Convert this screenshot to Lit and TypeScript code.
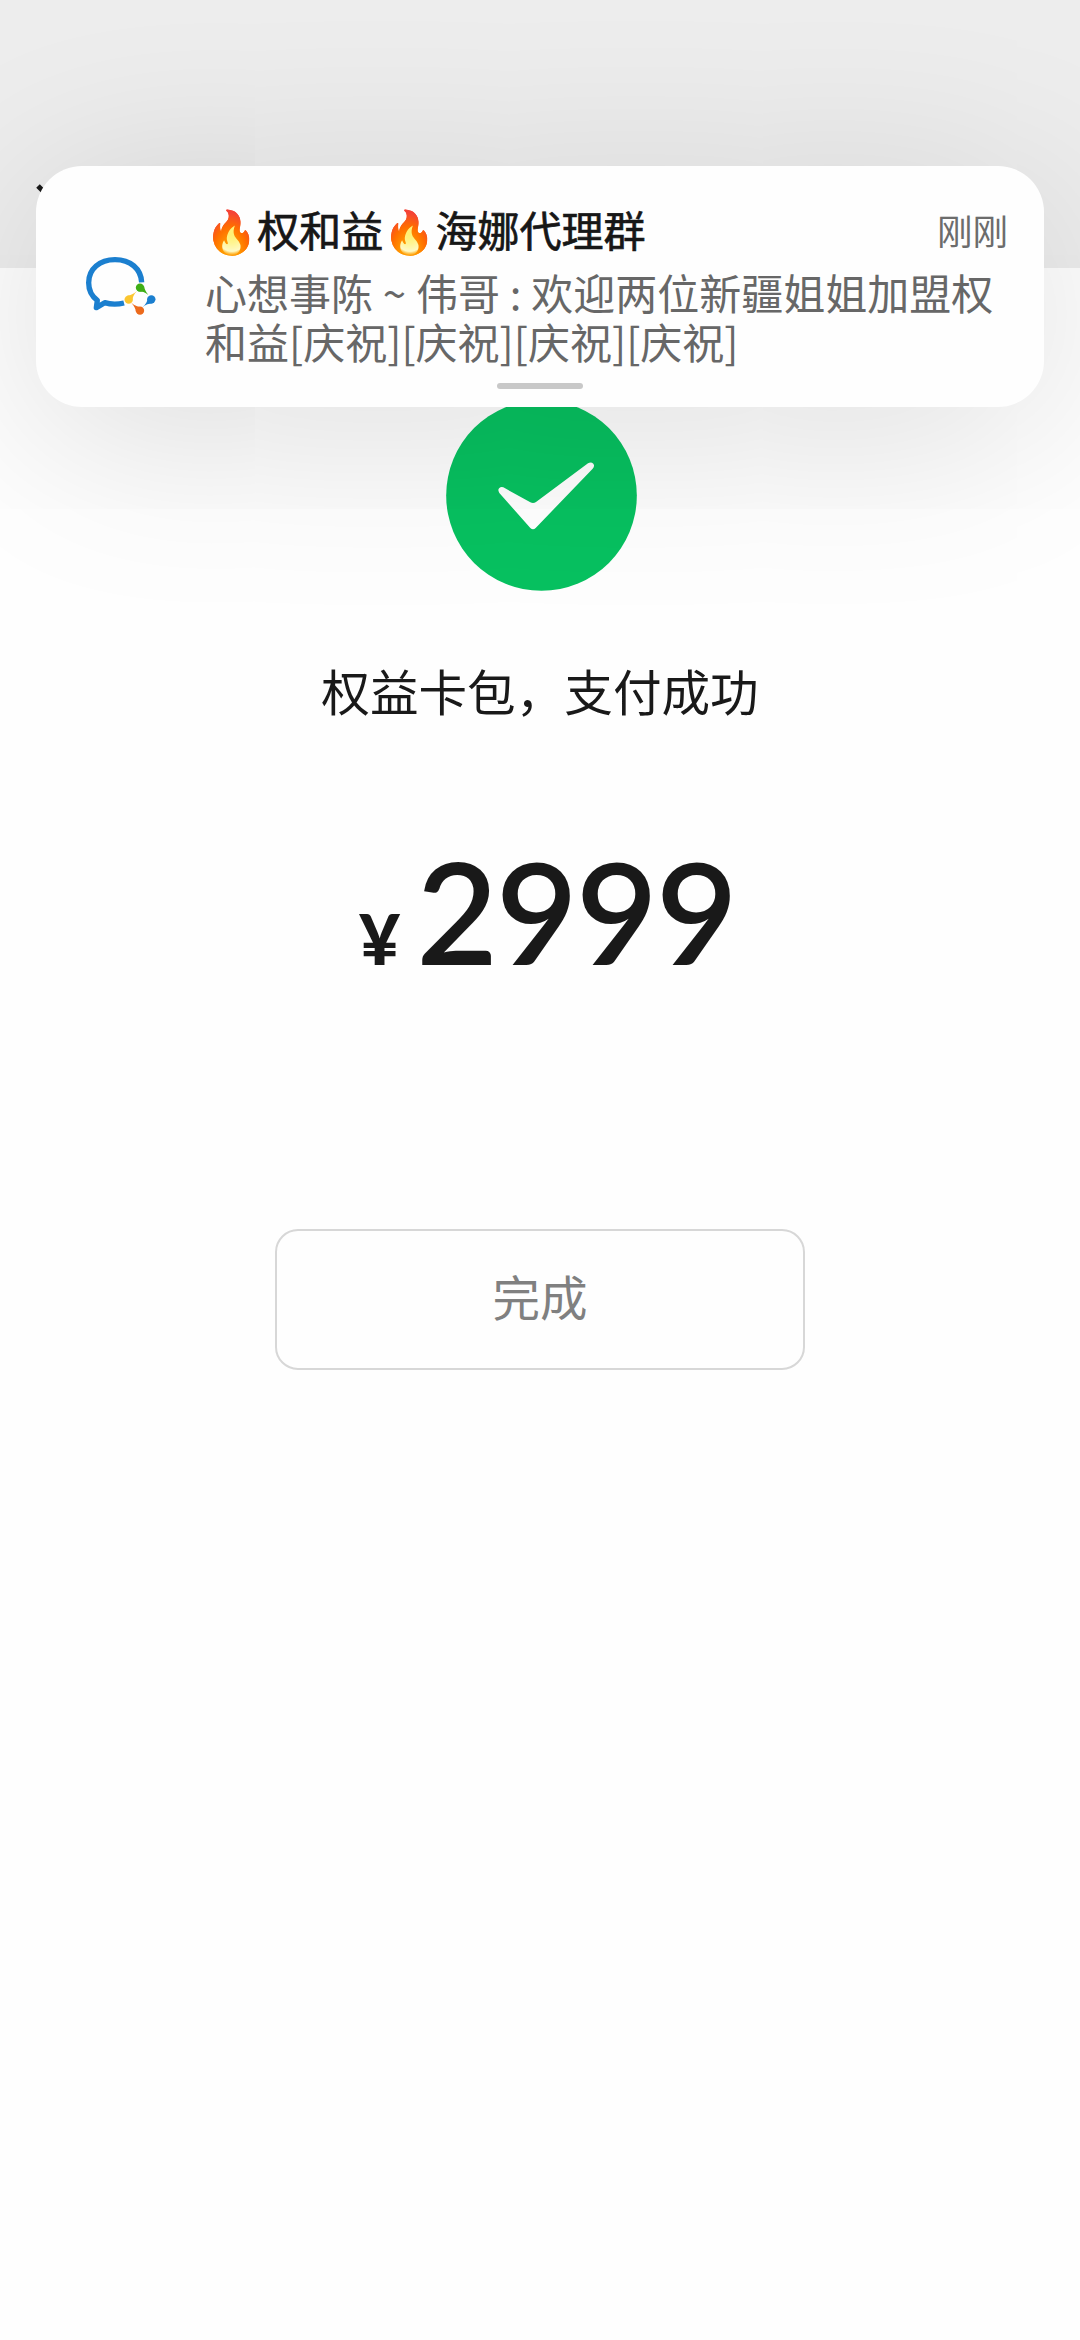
import { LitElement, html, css } from "lit";
import { customElement } from "lit/decorators.js";

@customElement("heads-up-notice")
class HeadsUpNotice extends LitElement {
  static styles = css`
    :host { display: block; box-sizing: border-box; height: 241px; border-radius: 46px; background: #fefefe;
      box-shadow: 0 28px 190px rgba(0, 0, 0, 0.14); position: relative; }
    .row { display: flex; padding: 37px 36px 0 48px; }
    .icon { width: 74px; height: 62px; margin-top: 52px; flex: none; display: block; }
    .text { margin-left: 47px; flex: 1; min-width: 0; }
    .head { display: flex; justify-content: space-between; height: 53px; line-height: 51px; }
    .title { font-family: "Noto Sans CJK SC", "Noto Color Emoji", sans-serif; font-size: 42px; color: #171717; white-space: pre;
      -webkit-text-stroke: 0.7px #171717; }
    .time { font-size: 35.5px; font-weight: 400; color: #6c6c6c; padding-top: 1px; }
    .body { font-size: 42px; line-height: 49px; color: #676767; white-space: nowrap; margin-top: 11px; word-spacing: 0.4px; }
    .grab { position: absolute; left: 461px; top: 217px; width: 86px; height: 6px; border-radius: 3px; background: #c8c8c8; }
  `;
  render() {
    return html`
      <div class="row">
        <svg class="icon" viewBox="72 75 222 186">
          <path d="M245 157C243 116 211 89 165 89C119 89 86 117 86 158C86 181 96 199 112 211L109 233L134 218C153 224 172 224 192 219" fill="none" stroke="#1b7fcf" stroke-width="16" stroke-linejoin="round"/>
          <g fill="#3fae16"><circle cx="240" cy="173" r="12.500"/><path d="M232 183C246 184 256 187 265 195C257 185 253 176 252 168Z"/></g>
          <g fill="#1b7fcf"><circle cx="274" cy="208" r="12.500"/><path d="M264 200C263 214 257 223 247 232C258 224 266 221 278 220Z"/></g>
          <g fill="#ec6a1c"><circle cx="240" cy="242" r="12.500"/><path d="M248 232C234 231 224 227 214 218C223 229 227 236 228 246Z"/></g>
          <g fill="#fbc62f"><circle cx="206" cy="209" r="12.500"/><path d="M216 217C217 203 221 193 231 183C220 192 213 196 202 197Z"/></g>
        </svg>
        <div class="text">
          <div class="head">
            <div class="title">🔥权和益🔥海娜代理群</div>
            <div class="time">刚刚</div>
          </div>
          <div class="body">心想事陈 ~ 伟哥 : 欢迎两位新疆姐姐加盟权<br />和益[庆祝][庆祝][庆祝][庆祝]</div>
        </div>
      </div>
      <div class="grab"></div>
    `;
  }
}

@customElement("app-root")
class AppRoot extends LitElement {
  static styles = css`
    :host { display: block; width: 1080px; height: 2340px; position: relative; overflow: hidden; background: #fefefe;
      font-family: "Noto Sans CJK SC", sans-serif; color: #191919; }
    .bar { height: 268px; box-sizing: border-box; padding: 184px 0 0 36px; background: #ededed; }
    .close { display: block; width: 36px; height: 36px; }
    .notice { position: absolute; left: 36px; top: 166px; width: 1008px; }
    .page { display: flex; flex-direction: column; align-items: center; padding-top: 132px; }
    .done { width: 191px; height: 191px; display: block; margin-left: 2px; }
    .msg { font-size: 48.6px; line-height: 70px; margin-top: 64px; white-space: nowrap; }
    .amount { display: flex; align-items: baseline; height: 170px; line-height: 170px; margin-top: 101px; margin-left: 15px;
      font-family: Lato, sans-serif; font-weight: 600; }
    .yen { font-size: 71px; font-weight: 900; margin-right: 16px; }
    .num { font-size: 141px; letter-spacing: -1.8px; }
    .btn { box-sizing: border-box; width: 530px; height: 141px; margin-top: 233px; border: 2px solid #d7d7d7; border-radius: 23px;
      background: #fefefe; color: #808080; font: 400 47.5px/130px "Noto Sans CJK SC", sans-serif; padding: 0 0 7px; }
  `;
  render() {
    return html`
      <div class="bar">
        <svg class="close" viewBox="0 0 36 36"><path d="M2 2L34 34M34 2L2 34" stroke="#191919" stroke-width="5"/></svg>
      </div>
      <div class="page">
        <svg class="done" viewBox="0 0 573 573">
          <circle cx="286.500" cy="286.500" r="286" fill="#07c160"/>
          <path d="M172 262L253 307Q262 312 270 306L426 190Q435 184 442 191Q447 198 440 206L269 384Q261 392 253 384L160 279Q154 269 160 264Q165 259 172 262Z" fill="#ffffff"/>
        </svg>
        <div class="msg">权益卡包，支付成功</div>
        <div class="amount"><span class="yen">¥</span><span class="num">2999</span></div>
        <button class="btn">完成</button>
      </div>
      <heads-up-notice class="notice"></heads-up-notice>
    `;
  }
}
